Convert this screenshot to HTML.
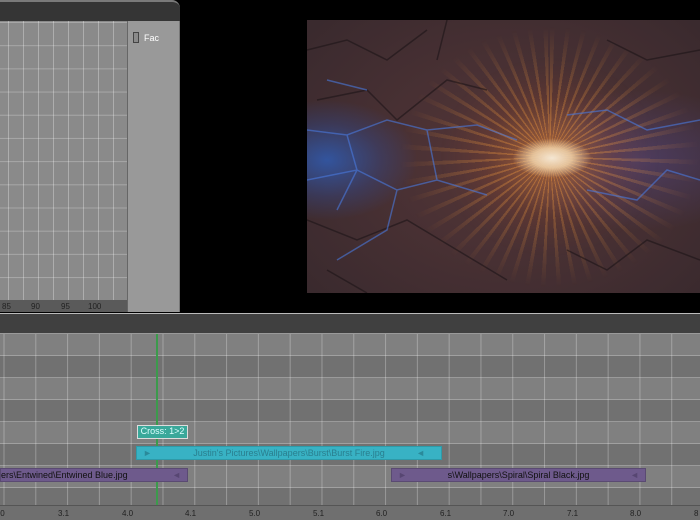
<!DOCTYPE html><html><head><style>
*{margin:0;padding:0;box-sizing:border-box}
body{width:700px;height:520px;background:#000;position:relative;overflow:hidden;font-family:"Liberation Sans",sans-serif}
.a{position:absolute}
.hdr{left:0;top:0;width:180px;height:21px;background:#353535;border-top:2px solid #7a7a7a;border-radius:0 8px 0 0}
.graph{left:0;top:21px;width:127px;height:279px;background:#8a8a8a;
background-image:linear-gradient(90deg,rgba(255,255,255,.3) 1px,transparent 1px),linear-gradient(rgba(255,255,255,.25) 1px,transparent 1px);
background-size:15px 100%,100% 23.2px;background-position:8px 0,0 1px}
.rul1{left:0;top:300px;width:127px;height:12px;background:#5a5a5a;font-size:8px;color:#222}
.side{left:127px;top:21px;width:53px;height:291px;background:#999;border-left:1px solid #666;border-right:1px solid #777}
.img{left:307px;top:20px;width:393px;height:273px;overflow:hidden;background:
radial-gradient(ellipse 90px 60px at 20px 140px,rgba(40,110,230,.6),rgba(40,90,200,.25) 60%,transparent),
radial-gradient(ellipse 140px 70px at 330px 140px,rgba(90,90,200,.3),transparent),
radial-gradient(ellipse 260px 200px at 200px 140px,#553638,#3a2a2e)}
.rays{left:0;top:0;width:393px;height:273px;
background:repeating-conic-gradient(from 0deg at 243px 137px,rgba(255,160,60,.5) 0deg 2deg,transparent 2deg 7deg),radial-gradient(ellipse 110px 100px at 243px 137px,rgba(220,130,50,.7),rgba(170,80,40,.3) 60%,transparent);
-webkit-mask-image:radial-gradient(ellipse 150px 130px at 243px 137px,#000 0%,rgba(0,0,0,.5) 50%,transparent 100%);mask-image:radial-gradient(ellipse 150px 130px at 243px 137px,#000 0%,rgba(0,0,0,.5) 50%,transparent 100%)}
.core{left:205px;top:118px;width:80px;height:40px;background:radial-gradient(ellipse at center,#f4e6d2 0%,rgba(240,210,170,.85) 35%,transparent 70%)}
.bar{left:0;top:313px;width:700px;height:21px;background:#404040;border-top:1px solid #bbb;border-bottom:1px solid #9a9a9a}
.tl{left:0;top:334px;width:700px;height:171px;
background-image:linear-gradient(90deg,rgba(255,255,255,.28) 1px,transparent 1px),repeating-linear-gradient(#808080 0 21px,#a0a0a0 21px 22px,#717171 22px 43px,#9a9a9a 43px 44px);
background-size:31.8px 100%,100% 100%;background-position:3.5px 0,0 0}
.rul2{left:0;top:505px;width:700px;height:15px;background:#6f6f6f;border-top:1px solid #555;font-size:8px;color:#222}
.rul2 span,.rul1 span{position:absolute;top:3px}
.clip{height:14px;font-size:9px;line-height:13px;text-align:center}
</style></head><body>
<div class="a hdr"></div>
<div class="a graph"></div>
<div class="a rul1"><span style="left:2px;top:2px">85</span><span style="left:31px;top:2px">90</span><span style="left:61px;top:2px">95</span><span style="left:88px;top:2px">100</span></div>
<div class="a side"><div class="a" style="left:5px;top:11px;width:6px;height:11px;border:1px solid #444;background:#8a8a8a"></div><div class="a" style="left:16px;top:12px;font-size:9px;color:#fff">Fac</div></div>
<div class="a img"><div class="a rays"></div>
<svg class="a" style="left:0;top:0" width="393" height="273" fill="none">
<g stroke="#1c1418" stroke-width="1.5" opacity=".6"><path d="M0 30 L40 20 L80 40 L120 10 M10 80 L60 70 L90 100 L140 60 L180 70 M0 200 L50 220 L100 200 L150 230 L200 260 M260 230 L300 250 L340 220 L393 240 M300 20 L340 40 L393 30 M20 250 L60 273 M140 0 L130 40"/></g>
<g stroke="#4a7ae0" stroke-width="1.5" opacity=".6"><path d="M0 110 L40 115 L80 100 L120 110 L170 105 L210 120 M0 160 L50 150 L90 170 L130 160 L180 175 M40 115 L50 150 L30 190 M90 170 L80 210 L30 240 M260 95 L300 90 L340 110 L393 100 M280 170 L330 180 L360 150 L393 160 M120 110 L130 160 M20 60 L60 70"/></g>
</svg>
<div class="a core"></div></div>
<div class="a bar"></div>
<div class="a tl"></div>
<div class="a" style="left:156px;top:334px;width:2px;height:171px;background:#3c9a4c"></div>
<div class="a clip" style="left:137px;top:425px;width:51px;background:#3aa89a;border:1px solid #ddd;color:#dff;line-height:11px">Cross: 1&gt;2</div>
<div class="a clip" style="left:136px;top:446px;width:306px;background:#38b2c4;color:#2a7f8f;border:1px solid #2e9aa8">Justin's Pictures\Wallpapers\Burst\Burst Fire.jpg<span class="a" style="left:6px;color:#2a8a9a">►</span><span class="a" style="right:16px;color:#2a8a9a">◄</span></div>
<div class="a clip" style="left:0;top:468px;width:188px;background:#6e5a8c;color:#111;text-align:left;border:1px solid #5a4a72">ers\Entwined\Entwined Blue.jpg<span class="a" style="right:6px;color:#574672">◄</span></div>
<div class="a clip" style="left:391px;top:468px;width:255px;background:#6e5a8c;color:#111;border:1px solid #5a4a72">s\Wallpapers\Spiral\Spiral Black.jpg<span class="a" style="left:6px;color:#574672">►</span><span class="a" style="right:6px;color:#574672">◄</span></div>
<div class="a rul2"><span style="left:-2px">.0</span><span style="left:58px">3.1</span><span style="left:122px">4.0</span><span style="left:185px">4.1</span><span style="left:249px">5.0</span><span style="left:313px">5.1</span><span style="left:376px">6.0</span><span style="left:440px">6.1</span><span style="left:503px">7.0</span><span style="left:567px">7.1</span><span style="left:630px">8.0</span><span style="left:694px">8</span></div>
</body></html>
